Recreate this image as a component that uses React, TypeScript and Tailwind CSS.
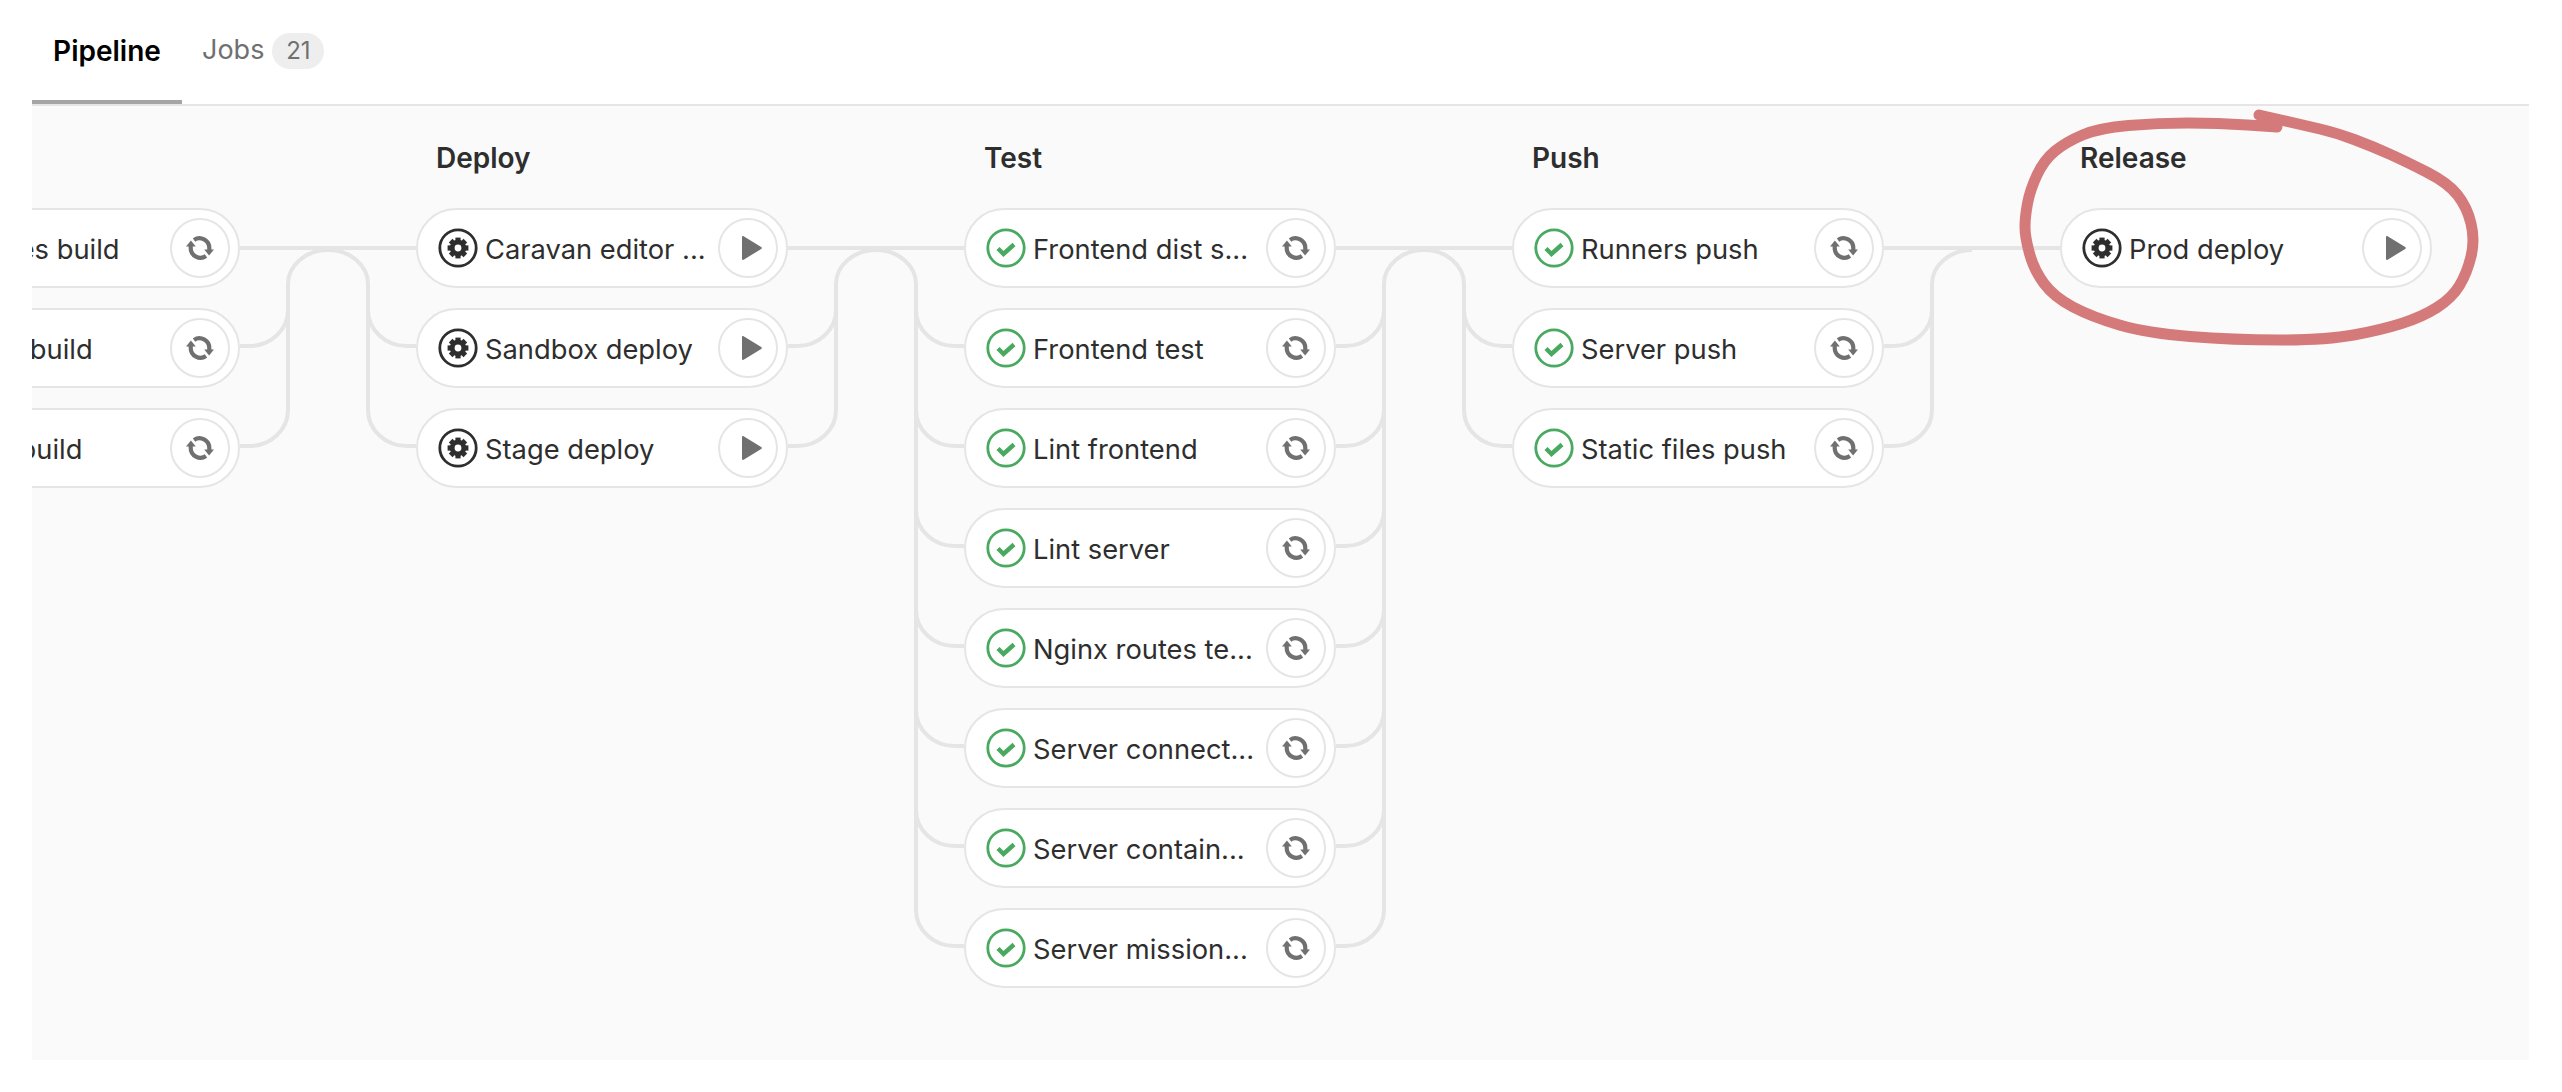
import React from "react";

const scribble = [
  [2259, 115], [2303, 125], [2337, 133], [2374, 147], [2407, 162], [2448, 183], [2467, 207], [2475, 240],
  [2467, 273], [2452, 298], [2422, 317], [2381, 330], [2326, 340], [2233, 340], [2147, 333], [2092, 317],
  [2054, 297], [2034, 270], [2025, 237], [2025, 217], [2030, 190], [2044, 160], [2066, 142], [2099, 128],
  [2158, 123], [2218, 123], [2277, 127],
];

// smooth line through the points, using midpoints as anchors
function smoothPath(pts: number[][]) {
  let d = `M${pts[0][0]} ${pts[0][1]}`;
  for (let i = 1; i < pts.length - 1; i++) {
    const mx = (pts[i][0] + pts[i + 1][0]) / 2;
    const my = (pts[i][1] + pts[i + 1][1]) / 2;
    d += ` Q${pts[i][0]} ${pts[i][1]} ${mx} ${my}`;
  }
  const last = pts[pts.length - 1];
  return d + ` L${last[0]} ${last[1]}`;
}

type Job = { name: string; status: "success" | "manual" };

const stages: { title: string; action: "retry" | "play"; jobs: Job[] }[] = [
  {
    title: "Build",
    action: "retry",
    jobs: [
      { name: "Services build", status: "success" },
      { name: "Server build", status: "success" },
      { name: "Nginx build", status: "success" },
    ],
  },
  {
    title: "Deploy",
    action: "play",
    jobs: [
      { name: "Caravan editor ...", status: "manual" },
      { name: "Sandbox deploy", status: "manual" },
      { name: "Stage deploy", status: "manual" },
    ],
  },
  {
    title: "Test",
    action: "retry",
    jobs: [
      { name: "Frontend dist s...", status: "success" },
      { name: "Frontend test", status: "success" },
      { name: "Lint frontend", status: "success" },
      { name: "Lint server", status: "success" },
      { name: "Nginx routes te...", status: "success" },
      { name: "Server connect...", status: "success" },
      { name: "Server contain...", status: "success" },
      { name: "Server mission...", status: "success" },
    ],
  },
  {
    title: "Push",
    action: "retry",
    jobs: [
      { name: "Runners push", status: "success" },
      { name: "Server push", status: "success" },
      { name: "Static files push", status: "success" },
    ],
  },
  {
    title: "Release",
    action: "play",
    jobs: [{ name: "Prod deploy", status: "manual" }],
  },
];

function SuccessIcon() {
  return (
    <svg width="40" height="40" viewBox="0 0 40 40" fill="none" className="shrink-0">
      <circle cx="20" cy="20" r="18.2" stroke="#4aa960" strokeWidth="2.8" />
      <path d="M12 20.500l5.500 5.500 10.500-9.500" stroke="#4aa960" strokeWidth="4.400" />
    </svg>
  );
}

function ManualIcon() {
  const teeth = [0, 45, 90, 135, 180, 225, 270, 315];
  return (
    <svg width="40" height="40" viewBox="0 0 40 40" fill="none" className="shrink-0">
      <circle cx="20" cy="20" r="18.2" stroke="#2e2e2e" strokeWidth="2.8" />
      <circle cx="20" cy="20" r="5.800" stroke="#2e2e2e" strokeWidth="4.800" />
      {teeth.map((a) => (
        <rect key={a} x="17.400" y="9.600" width="5.200" height="4.400" fill="#2e2e2e" transform={`rotate(${a} 20 20)`} />
      ))}
    </svg>
  );
}

function RetryIcon() {
  return (
    <svg width="28" height="26" viewBox="0 0 28 26" fill="none">
      <path d="M8 4.900A9.800 9.800 0 0 1 23.300 13v2" stroke="#707070" strokeWidth="4.200" />
      <path d="M20 21.100A9.800 9.800 0 0 1 4.700 13v-2" stroke="#707070" strokeWidth="4.200" />
      <path d="M18.200 14.400h9.800l-4.900 6z" fill="#707070" />
      <path d="M9.800 11.600H0l4.900-6z" fill="#707070" />
    </svg>
  );
}

function PlayIcon() {
  return (
    <svg width="20" height="24" viewBox="0 0 20 24" className="ml-[7px]">
      <path d="M0 1.200C0 .3.8-.2 1.600.3l17.600 10.700c.8.5.8 1.500 0 2L1.600 23.700C.8 24.200 0 23.700 0 22.800z" fill="#707070" />
    </svg>
  );
}

function JobPill({ job, action }: { job: Job; action: "retry" | "play" }) {
  return (
    <div className="flex h-[80px] w-[372px] items-center rounded-full border-2 border-[#e5e5e5] bg-white pl-[20px] pr-[8px]">
      {job.status === "success" ? <SuccessIcon /> : <ManualIcon />}
      <span className="ml-[7px] flex-1 whitespace-nowrap pt-[3px] text-[27.3px] leading-none text-[#2e2e2e]">{job.name}</span>
      <button className="flex h-[60px] w-[60px] shrink-0 items-center justify-center rounded-full border-2 border-[#e5e5e5] bg-white">
        {action === "retry" ? <RetryIcon /> : <PlayIcon />}
      </button>
    </div>
  );
}

// y of each job row's line, relative to the first row
const rowY = (i: number) => (i === 0 ? 0 : i * 100 - 2);

function Connector({ left, right }: { left: number; right: number }) {
  const rows = Math.max(left, right);
  const side = (n: number, flip: boolean) => {
    const X = (x: number) => (flip ? 176 - x : x);
    const sweep = flip ? 1 : 0;
    const parts = [`M${X(88)} 2A40 34 0 0 ${sweep} ${X(48)} 36`];
    parts.push(`V${rowY(n - 1) - 36}`);
    for (let i = 1; i < n; i++) {
      parts.push(`M${X(0)} ${rowY(i)}H${X(9)}A39 36 0 0 ${sweep} ${X(48)} ${rowY(i) - 36}`);
    }
    return parts.join("");
  };
  return (
    <svg width="176" height={rowY(rows - 1) + 8} viewBox={`0 -4 176 ${rowY(rows - 1) + 8}`} fill="none" className="mt-[138px] shrink-0">
      <path d="M0 0H176" stroke="#e5e5e5" strokeWidth="4" />
      <path d={side(left, false)} stroke="#e5e5e5" strokeWidth="4" />
      {right > 1 && <path d={side(right, true)} stroke="#e5e5e5" strokeWidth="4" />}
    </svg>
  );
}

export default function App() {
  return (
    <div className="relative h-[1092px] w-full overflow-hidden bg-white font-['Inter',sans-serif]">
      <div className="ml-8 w-[2497px]">
        <div className="flex h-[106px] border-b-2 border-[#e5e5e5]">
          <div className="flex h-[104px] w-[150px] items-center justify-center border-b-4 border-[#a5a5a5] pt-[2px] text-[28px] font-semibold text-black">
            Pipeline
          </div>
          <div className="ml-[20px] flex h-[100px] items-center gap-[8px] pt-[1px] text-[27px] text-[#707070]">
            Jobs
            <span className="flex h-[36px] w-[52px] items-center justify-center rounded-full bg-[#eeeeee] text-[24px]">21</span>
          </div>
        </div>

        <div className="flex h-[954px] overflow-hidden bg-[#fafafa]">
          <div className="ml-[-164px] flex items-start">
            {stages.map((stage, i) => (
              <React.Fragment key={stage.title}>
                <div className="w-[372px] shrink-0 pt-[35px]">
                  <h3 className="mb-[33px] h-[34px] pl-[20px] text-[28px] font-semibold leading-[34px] text-[#2e2e2e]">
                    {stage.title}
                  </h3>
                  <div className="flex flex-col gap-[20px]">
                    {stage.jobs.map((job) => (
                      <JobPill key={job.name} job={job} action={stage.action} />
                    ))}
                  </div>
                </div>
                {i < stages.length - 1 && <Connector left={stage.jobs.length} right={stages[i + 1].jobs.length} />}
              </React.Fragment>
            ))}
          </div>
        </div>
      </div>

      {/* hand drawn circle around the release stage */}
      <svg width="2562" height="1092" viewBox="0 0 2562 1092" fill="none" className="pointer-events-none absolute left-0 top-0">
        <path d={smoothPath(scribble)} stroke="#d57a7a" strokeWidth="11" strokeLinecap="round" strokeLinejoin="round" />
      </svg>
    </div>
  );
}
